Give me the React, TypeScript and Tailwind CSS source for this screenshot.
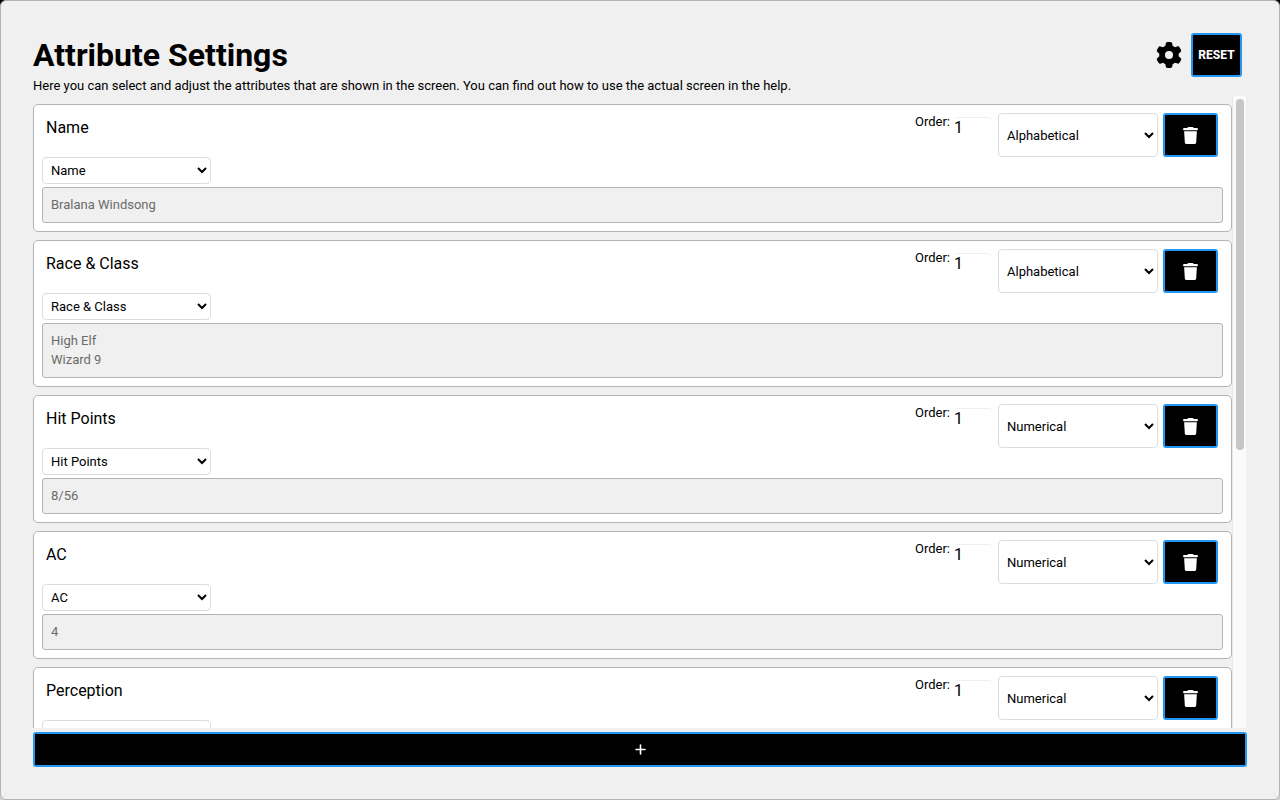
import { useLayoutEffect, useRef, useState } from "react";
import { FaGear, FaPlus, FaTrash } from "react-icons/fa6";

type SortMode = "Alphabetical" | "Numerical";

type Attribute = {
  id: number;
  name: string;
  order: number;
  sort: SortMode;
  sample: string;
};

const DEFAULTS: Attribute[] = [
  { id: 1, name: "Name", order: 1, sort: "Alphabetical", sample: "Bralana Windsong" },
  { id: 2, name: "Race & Class", order: 1, sort: "Alphabetical", sample: "High Elf\nWizard 9" },
  { id: 3, name: "Hit Points", order: 1, sort: "Numerical", sample: "8/56" },
  { id: 4, name: "AC", order: 1, sort: "Numerical", sample: "4" },
  { id: 5, name: "Perception", order: 1, sort: "Numerical", sample: "12" },
  { id: 6, name: "Speed", order: 1, sort: "Numerical", sample: "30" },
  { id: 7, name: "Languages", order: 1, sort: "Alphabetical", sample: "Common\nElvish" },
  { id: 8, name: "Notes", order: 1, sort: "Alphabetical", sample: "-" },
];

const SELECT = "rounded border border-[#dcdcdc] bg-white px-1 text-[13px] text-black";
const BUTTON = "flex items-center justify-center rounded-[3px] border-2 border-[#2196f3] bg-black text-white";

function AttributeCard({ attribute, onDelete }: { attribute: Attribute; onDelete: () => void }) {
  const { id, name, order, sort, sample } = attribute;

  return (
    <li className="rounded-[5px] border border-[#b3b3b3] bg-white p-2">
      <div className="flex items-start">
        <input
          type="text"
          aria-label="Attribute name"
          defaultValue={name}
          className="h-7 min-w-0 flex-1 bg-transparent px-1 text-base"
        />
        <label htmlFor={`order-${id}`} className="mr-1 leading-[18px]">
          Order:
        </label>
        <input
          id={`order-${id}`}
          type="text"
          inputMode="numeric"
          defaultValue={order}
          className="mt-1 mr-[6px] h-5 w-[38px] rounded border-t border-[#efefef] bg-transparent text-base"
        />
        <select aria-label="Sorting" defaultValue={sort} className={`${SELECT} mr-[5px] h-11 w-40`}>
          <option>Alphabetical</option>
          <option>Numerical</option>
        </select>
        <button type="button" aria-label="Delete attribute" onClick={onDelete} className={`${BUTTON} mr-[5px] h-11 w-[55px]`}>
          <FaTrash size={17} />
        </button>
      </div>
      <select aria-label="Source" defaultValue={name} className={`${SELECT} block h-[27px] w-[169px]`}>
        {DEFAULTS.map((a) => (
          <option key={a.id}>{a.name}</option>
        ))}
      </select>
      <textarea
        aria-label="Preview"
        disabled
        rows={sample.split("\n").length}
        value={sample}
        className="mt-[3px] block w-full resize-none overflow-hidden rounded-[3px] border border-[#b3b3b3] bg-[#f0f0f0] px-2 pt-[7px] pb-2 leading-[19px] text-[#6b6b6b]"
      />
    </li>
  );
}

export default function App() {
  const [attributes, setAttributes] = useState(DEFAULTS);
  const [thumb, setThumb] = useState({ top: 0, height: 100 });
  const list = useRef<HTMLUListElement>(null);

  const updateThumb = () => {
    const el = list.current;
    if (!el) return;
    setThumb({
      top: (el.scrollTop / el.scrollHeight) * 100,
      height: (el.clientHeight / el.scrollHeight) * 100,
    });
  };

  useLayoutEffect(() => {
    updateThumb();
    window.addEventListener("resize", updateThumb);
    return () => window.removeEventListener("resize", updateThumb);
  }, [attributes]);

  const add = () =>
    setAttributes([...attributes, { id: Date.now(), name: "Name", order: 1, sort: "Alphabetical", sample: "" }]);

  return (
    <div className="h-screen bg-linear-to-b from-black to-[#d0d0d0] font-[Roboto,sans-serif] text-[13px] text-black">
      <main className="flex h-full flex-col rounded-md border border-[#b3b3b3] bg-[#f0f0f0] p-8">
        <header className="pb-[2px]">
          <div className="flex h-11 items-center">
            <h1 className="flex-1 text-[32px] font-bold">Attribute Settings</h1>
            <button type="button" aria-label="Settings" className="mr-[9px]">
              <FaGear size={26} />
            </button>
            <button type="button" onClick={() => setAttributes(DEFAULTS)} className={`${BUTTON} mr-[5px] h-11 w-[51px] text-xs font-extrabold`}>
              RESET
            </button>
          </div>
          <p className="leading-[17px]">
            Here you can select and adjust the attributes that are shown in the screen. You can find out how to use the
            actual screen in the help.
          </p>
        </header>

        <div className="flex min-h-0 flex-1">
          <ul
            ref={list}
            onScroll={updateThumb}
            className="flex min-w-0 flex-1 flex-col gap-2 overflow-y-auto pt-2 [scrollbar-width:none]"
          >
            {attributes.map((a) => (
              <AttributeCard
                key={a.id}
                attribute={a}
                onDelete={() => setAttributes(attributes.filter((other) => other.id !== a.id))}
              />
            ))}
          </ul>
          {/* Scroll track */}
          <div aria-hidden="true" className="mr-px w-[14px] border-l border-[#e8e8e8] bg-[#fafafa] py-[3px] pr-[2px] pl-[3px]">
            <div className="h-full">
              <div
                className="relative w-2 rounded-full bg-[#c6c6c6]"
                style={{ top: `${thumb.top}%`, height: `${thumb.height}%` }}
              />
            </div>
          </div>
        </div>

        <button type="button" aria-label="Add attribute" onClick={add} className={`${BUTTON} mt-1 h-[35px] shrink-0`}>
          <FaPlus size={13} />
        </button>
      </main>
    </div>
  );
}
